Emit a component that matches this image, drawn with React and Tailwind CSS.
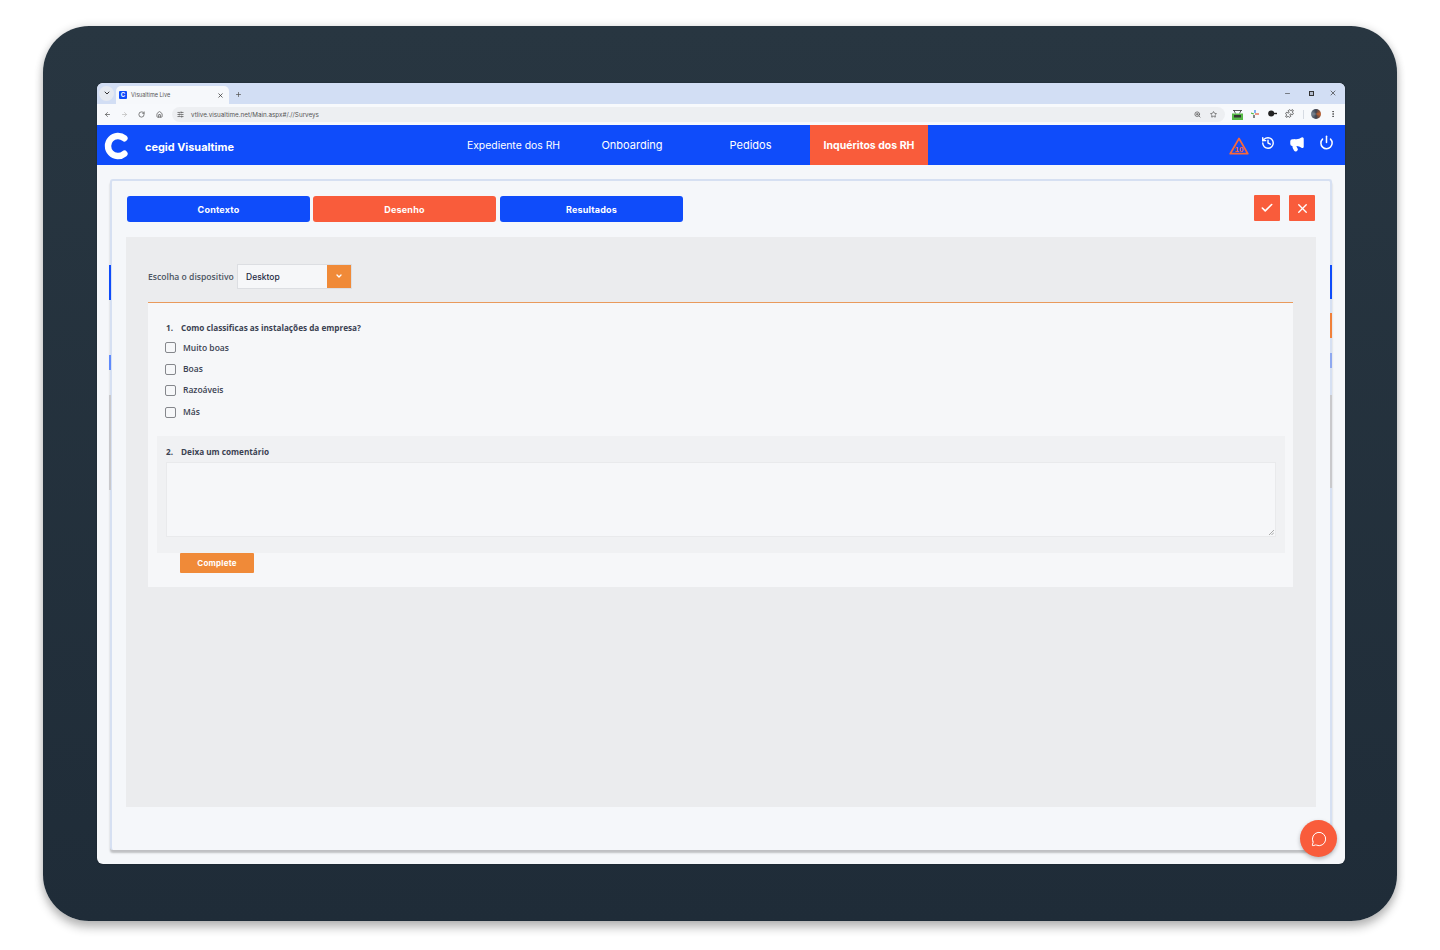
import React from "react";
import { ChevronDown, ArrowLeft, ArrowRight, RotateCw, Home, SlidersHorizontal, X, Plus, ZoomIn, Star, Minus, Puzzle, MoreVertical, Check, History, Megaphone, Power, MessageCircle } from "lucide-react";

const ui = { fontFamily: '"Inter", "Liberation Sans", sans-serif' };
const body = { fontFamily: '"Open Sans", "Noto Sans", sans-serif' };

function TabButton({ color, label, className }) {
  return (
    <div className={`flex h-[26px] w-[183px] items-center justify-center rounded-[3px] pt-[1px] text-[9px] font-bold tracking-[0.2px] text-white ${color} ${className || ""}`}>
      {label}
    </div>
  );
}

function Option({ label }) {
  return (
    <div className="flex h-[21.4px] items-center">
      <span className="h-[11px] w-[11px] rounded-[2px] border border-[#85878c] bg-[#f6f7f9]" />
      <span className="ml-[7px] text-[8.5px] font-semibold text-[#3b4252]">{label}</span>
    </div>
  );
}

function NavItem({ label, className }) {
  return <div className={`flex h-full items-center justify-center whitespace-nowrap pt-[1px] text-white ${className}`}>{label}</div>;
}

export default function App() {
  return (
    <div className="h-[950px] w-[1440px] overflow-hidden bg-white pl-[43px] pt-[26px]" style={ui}>
      <div className="h-[895px] w-[1354px] rounded-[46px] bg-gradient-to-b from-[#283641] to-[#1f2c38] pl-[54px] pt-[57px] shadow-[0_7px_10px_rgba(0,0,0,0.24),0_0_8px_rgba(0,0,0,0.14)]">
        <div className="relative flex h-[781px] w-[1248px] flex-col rounded-[6px] bg-[#f5f7fa] shadow-[0_0_2px_rgba(0,0,0,0.3)]">
          {/* tab strip */}
          <div className="flex h-[21px] items-end rounded-t-[6px] bg-[#d2def4] pl-[2px]">
            <div className="mb-[1px] flex h-[15px] w-[15px] items-center justify-center self-center rounded-full bg-[#e6eaf1]">
              <ChevronDown size={8} strokeWidth={3} className="text-[#333]" />
            </div>
            <div className="ml-[2px] flex h-[18px] w-[113px] items-center rounded-t-[5px] bg-[#f6f8fb] pl-[3px] pr-[5px]">
              <div className="flex h-[8px] w-[8px] items-center justify-center rounded-[1px] bg-[#0f4cfa] text-[6px] font-bold leading-none text-white">C</div>
              <span className="ml-[4px] flex-1 text-[5.5px] text-[#555]">Visualtime Live</span>
              <X size={7} strokeWidth={2.5} className="text-[#333]" />
            </div>
            <Plus size={7} strokeWidth={2.5} className="mb-[6px] ml-[6px] text-[#555]" />
            <div className="flex-1" />
            <div className="mb-[7px] mr-[8px] flex items-center text-[#333]">
              <Minus size={7} strokeWidth={2} />
              <div className="relative ml-[18px] h-[5px] w-[5px] border border-[#333] bg-[#333]/20" />
              <X size={8} strokeWidth={2} className="ml-[15px]" />
            </div>
          </div>
          {/* toolbar */}
          <div className="flex h-[21px] items-center bg-[#f7f9fc] pl-[7px] text-[#555]">
            <ArrowLeft size={7} strokeWidth={2.5} />
            <ArrowRight size={7} strokeWidth={2.5} className="ml-[10px] text-[#bbb]" />
            <RotateCw size={7} strokeWidth={2.5} className="ml-[10px]" />
            <Home size={7} strokeWidth={2.5} className="ml-[11px]" />
            <div className="ml-[9px] flex h-[15px] w-[1053px] items-center rounded-full bg-[#edeff2] pl-[5px] pr-[8px]">
              <SlidersHorizontal size={7} strokeWidth={2.5} />
              <span className="ml-[7px] flex-1 pt-[2px] text-[6.3px] text-[#555]">vtlive.visualtime.net/Main.aspx#/.//Surveys</span>
              <ZoomIn size={7} strokeWidth={2.5} />
              <Star size={7} strokeWidth={2.5} className="ml-[9px]" />
            </div>
            <svg width="11" height="10" viewBox="0 0 11 10" className="ml-[7px]">
              <path d="M1 .5h9M2 .5l1.5 3M9 .5l-1.5 3" stroke="#333" strokeWidth="0.8" fill="none" />
              <rect x="0" y="3.5" width="11" height="6.5" fill="#57b947" />
              <rect x="2" y="5" width="7" height="2.5" fill="#333" />
            </svg>
            <svg width="8" height="8" viewBox="0 0 8 8" className="ml-[8px] -mt-[2px]">
              <path d="M4 0v3" stroke="#2f80ed" strokeWidth="1.2" />
              <path d="M4 4h4" stroke="#e0563a" strokeWidth="1.2" />
              <path d="M0 3l3 1" stroke="#57b947" strokeWidth="1.2" />
              <path d="M3 5v3" stroke="#333" strokeWidth="1.2" />
            </svg>
            <svg width="9" height="7" viewBox="0 0 9 7" className="ml-[9px] -mt-[2px]">
              <circle cx="3.2" cy="3.5" r="3" fill="#222" />
              <path d="M5 3.5h4" stroke="#222" strokeWidth="1.4" />
            </svg>
            <Puzzle size={9} strokeWidth={2} className="ml-[8px] -mt-[2px] text-[#333]" />
            <div className="ml-[9px] h-[9px] w-[1px] bg-[#d6dbe3]" />
            <div className="ml-[7px] -mt-[2px] h-[10px] w-[10px] rounded-full bg-[conic-gradient(#3b4250,#c2622f,#3b4250,#7b8794,#3b4250)]" />
            <MoreVertical size={8} strokeWidth={2.5} className="ml-[8px] -mt-[2px] text-[#444]" />
          </div>
          {/* nav */}
          <div className="flex h-[40px] items-center bg-[#0f4cfa]">
            <svg width="24" height="28" viewBox="0 0 24 28" className="ml-[7px] mt-[2px] shrink-0">
              <path d="M20.4 6.3A10 10 0 1 0 20.4 21.7" fill="none" stroke="white" strokeWidth="6.4" strokeLinecap="round" />
            </svg>
            <div className="ml-[17px] w-[321px] shrink-0 pt-[5px] text-[10.9px] font-bold text-white">cegid Visualtime</div>
            <NavItem label="Expediente dos RH" className="w-[95px] text-[10.4px]" />
            <NavItem label="Onboarding" className="ml-[40px] w-[62px] text-[11px]" />
            <NavItem label="Pedidos" className="ml-[67px] w-[41px] text-[11px]" />
            <NavItem label="Inquéritos dos RH" className="ml-[39px] w-[118px] bg-[#f95c3b] text-[10.5px] font-bold" />
            <div className="flex flex-1 items-center justify-end pr-[11px] text-white">
              <svg width="20" height="18" viewBox="0 0 20 18" className="mr-[12px] mt-[2px]">
                <path d="M10 1.5 L18.8 16.7 L1.2 16.7 Z" fill="none" stroke="#f9683a" strokeWidth="1.7" strokeLinejoin="round" />
                <text x="10" y="15" textAnchor="middle" fontSize="8" fontWeight="700" fill="#f9683a" fontFamily="Liberation Sans">10</text>
              </svg>
              <History size={14} strokeWidth={2.4} className="-mt-[4px]" />
              <Megaphone size={16} strokeWidth={2.2} fill="white" className="ml-[14px] -mt-[3px]" />
              <Power size={15} strokeWidth={2.4} className="ml-[14px] -mt-[6px]" />
            </div>
          </div>
          {/* content */}
          <div className="flex-1 px-[13px] pt-[14px]">
            <div className="h-[671px] w-[1222px] rounded-[3px] border-l-2 border-r-2 border-t-2 border-[#d6e0f2] bg-[#f5f7fa] pl-[15px] pr-[14px] pt-[15px] shadow-[0_3px_2px_rgba(0,0,0,0.22)]">
              <div className="flex items-start">
                <TabButton color="bg-[#0f4cfa]" label="Contexto" />
                <TabButton color="bg-[#f95c3b]" label="Desenho" className="ml-[3px]" />
                <TabButton color="bg-[#0f4cfa]" label="Resultados" className="ml-[4px]" />
                <div className="flex-1" />
                <div className="-mt-[1px] flex h-[26px] w-[26px] items-center justify-center rounded-[1px] bg-[#f95c3b]">
                  <Check size={14} strokeWidth={2.8} className="text-white" />
                </div>
                <div className="-mt-[1px] ml-[9px] mr-[1px] flex h-[26px] w-[26px] items-center justify-center rounded-[1px] bg-[#f95c3b]">
                  <X size={15} strokeWidth={2.2} className="text-white" />
                </div>
              </div>
              <div className="ml-[-1px] mt-[15px] h-[570px] w-[1190px] bg-[#ebecee] px-[22px] pt-[26px]">
                <div className="flex h-[26px] items-center">
                  <span className="w-[89px] pt-[2px] text-[8.6px] font-semibold text-[#4b5563]" style={body}>Escolha o dispositivo</span>
                  <div className="flex h-[25px] w-[115px] border border-[#dcdee2] bg-[#f6f7f9]">
                    <span className="flex w-[89px] items-center pl-[8px] pt-[2px] text-[8.5px] font-medium text-[#1f2a44]">Desktop</span>
                    <span className="flex flex-1 items-center justify-center bg-[#f08a38]">
                      <ChevronDown size={8} strokeWidth={4} className="text-white" />
                    </span>
                  </div>
                </div>
                <div className="mt-[13px] h-[285px] w-[1145px] border-t border-[#e99a5c] bg-[#f6f7f9] pl-[9px]" style={body}>
                  <div className="pl-[9px] pt-[19px] text-[8.2px] font-bold text-[#3b4252]">
                    <span className="inline-block w-[15px]">1.</span>Como classificas as instalações da empresa?
                  </div>
                  <div className="ml-[8px] mt-[3px]">
                    <Option label="Muito boas" />
                    <Option label="Boas" />
                    <Option label="Razoáveis" />
                    <Option label="Más" />
                  </div>
                  <div className="mt-[13px] h-[117px] w-[1128px] bg-[#f0f1f3] pl-[9px] pt-[10px]">
                    <div className="text-[8.2px] font-bold text-[#3b4252]">
                      <span className="inline-block w-[15px]">2.</span>Deixa um comentário
                    </div>
                    <div className="relative mt-[4px] h-[75px] w-[1110px] border border-[#e9eaec] bg-[#f6f7f9]">
                      <svg width="5" height="5" viewBox="0 0 5 5" className="absolute bottom-[1px] right-[1px]">
                        <path d="M0 5 L5 0 M2.5 5 L5 2.5" stroke="#888" strokeWidth="0.7" />
                      </svg>
                    </div>
                  </div>
                  <div className="ml-[23px] flex h-[20px] w-[74px] items-center justify-center rounded-[1px] bg-[#f08a38] text-[8px] font-bold tracking-[0.2px] text-white" style={ui}>
                    Complete
                  </div>
                </div>
              </div>
            </div>
          </div>
          {/* slivers of the page behind the modal */}
          <div className="absolute left-[12px] top-[182px] h-[35px] w-[2px] bg-[#0f4cfa]" />
          <div className="absolute left-[12px] top-[272px] h-[15px] w-[2px] bg-[#5f8afc]" />
          <div className="absolute left-[12px] top-[312px] h-[95px] w-[2px] bg-[#c9c9cc]" />
          <div className="absolute left-[1233px] top-[182px] h-[34px] w-[2px] bg-[#0f4cfa]" />
          <div className="absolute left-[1233px] top-[230px] h-[25px] w-[2px] bg-[#f0803a]" />
          <div className="absolute left-[1233px] top-[270px] h-[15px] w-[2px] bg-[#8fa9f0]" />
          <div className="absolute left-[1233px] top-[312px] h-[93px] w-[2px] bg-[#c9c9cc]" />
          {/* chat */}
          <div className="absolute left-[1203px] top-[737px] flex h-[37px] w-[37px] items-center justify-center rounded-full bg-[#f95c3b] shadow-[0_2px_4px_rgba(0,0,0,0.25)]">
            <MessageCircle size={16} strokeWidth={1.5} className="text-white" />
          </div>
        </div>
      </div>
    </div>
  );
}
